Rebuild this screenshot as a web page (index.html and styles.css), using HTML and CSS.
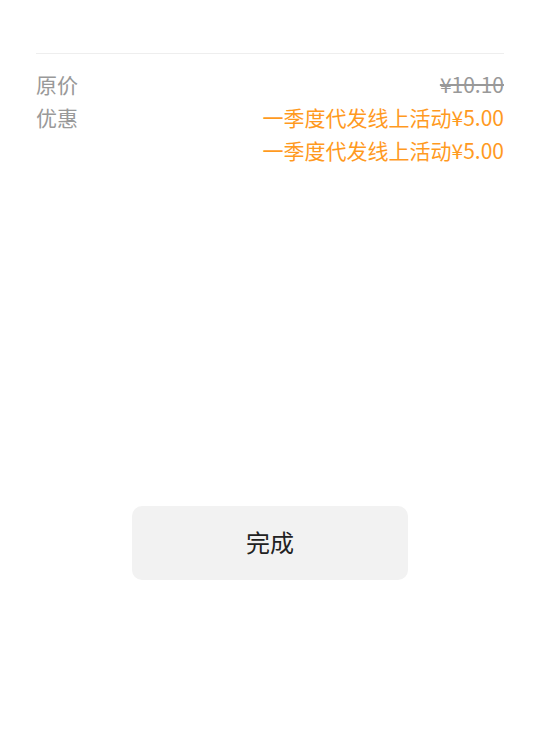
FILE: index.html
```html
<!DOCTYPE html>
<html lang="zh-CN">
<head>
  <meta charset="UTF-8">
  <meta name="viewport" content="width=device-width, initial-scale=1.0">
  <title>价格明细</title>
  <link rel="stylesheet" href="styles.css">
</head>
<body>

  <!-- Price detail -->
  <div class="detail">
    <div class="divider"></div>

    <div class="row">
      <div class="label">原价</div>
      <div class="value original">¥10.10</div>
    </div>

    <div class="row">
      <div class="label">优惠</div>
      <div class="value discounts">
        <div>一季度代发线上活动¥5.00</div>
        <div>一季度代发线上活动¥5.00</div>
      </div>
    </div>
  </div>

  <!-- Done button -->
  <div class="actions">
    <button class="done">完成</button>
  </div>

</body>
</html>
```

FILE: styles.css
```css
body {
  margin: 0;
  font-family: "Noto Sans CJK SC", "Noto Sans", sans-serif;
  background-color: #fff;
  color: #222;
}

/* Price detail */
.detail {
  padding: 53px 36px 0;
}

.divider {
  height: 1px;
  background-color: #eeeeee;
  margin-bottom: 14px;
}

.row {
  display: flex;
  justify-content: space-between;
  font-size: 21px;
  line-height: 33px;
}

.label {
  color: #999;
}

.value {
  text-align: right;
}

.original {
  color: #999;
  text-decoration: line-through;
}

.discounts {
  color: #ff9a1f;
}

/* Done button */
.actions {
  display: flex;
  justify-content: center;
  margin-top: 339px;
}

.done {
  width: 276px;
  height: 74px;
  padding: 0 0 4px;
  border: none;
  border-radius: 10px;
  background-color: #f2f2f2;
  color: #222;
  font-family: inherit;
  font-size: 24px;
  cursor: pointer;
}
```
